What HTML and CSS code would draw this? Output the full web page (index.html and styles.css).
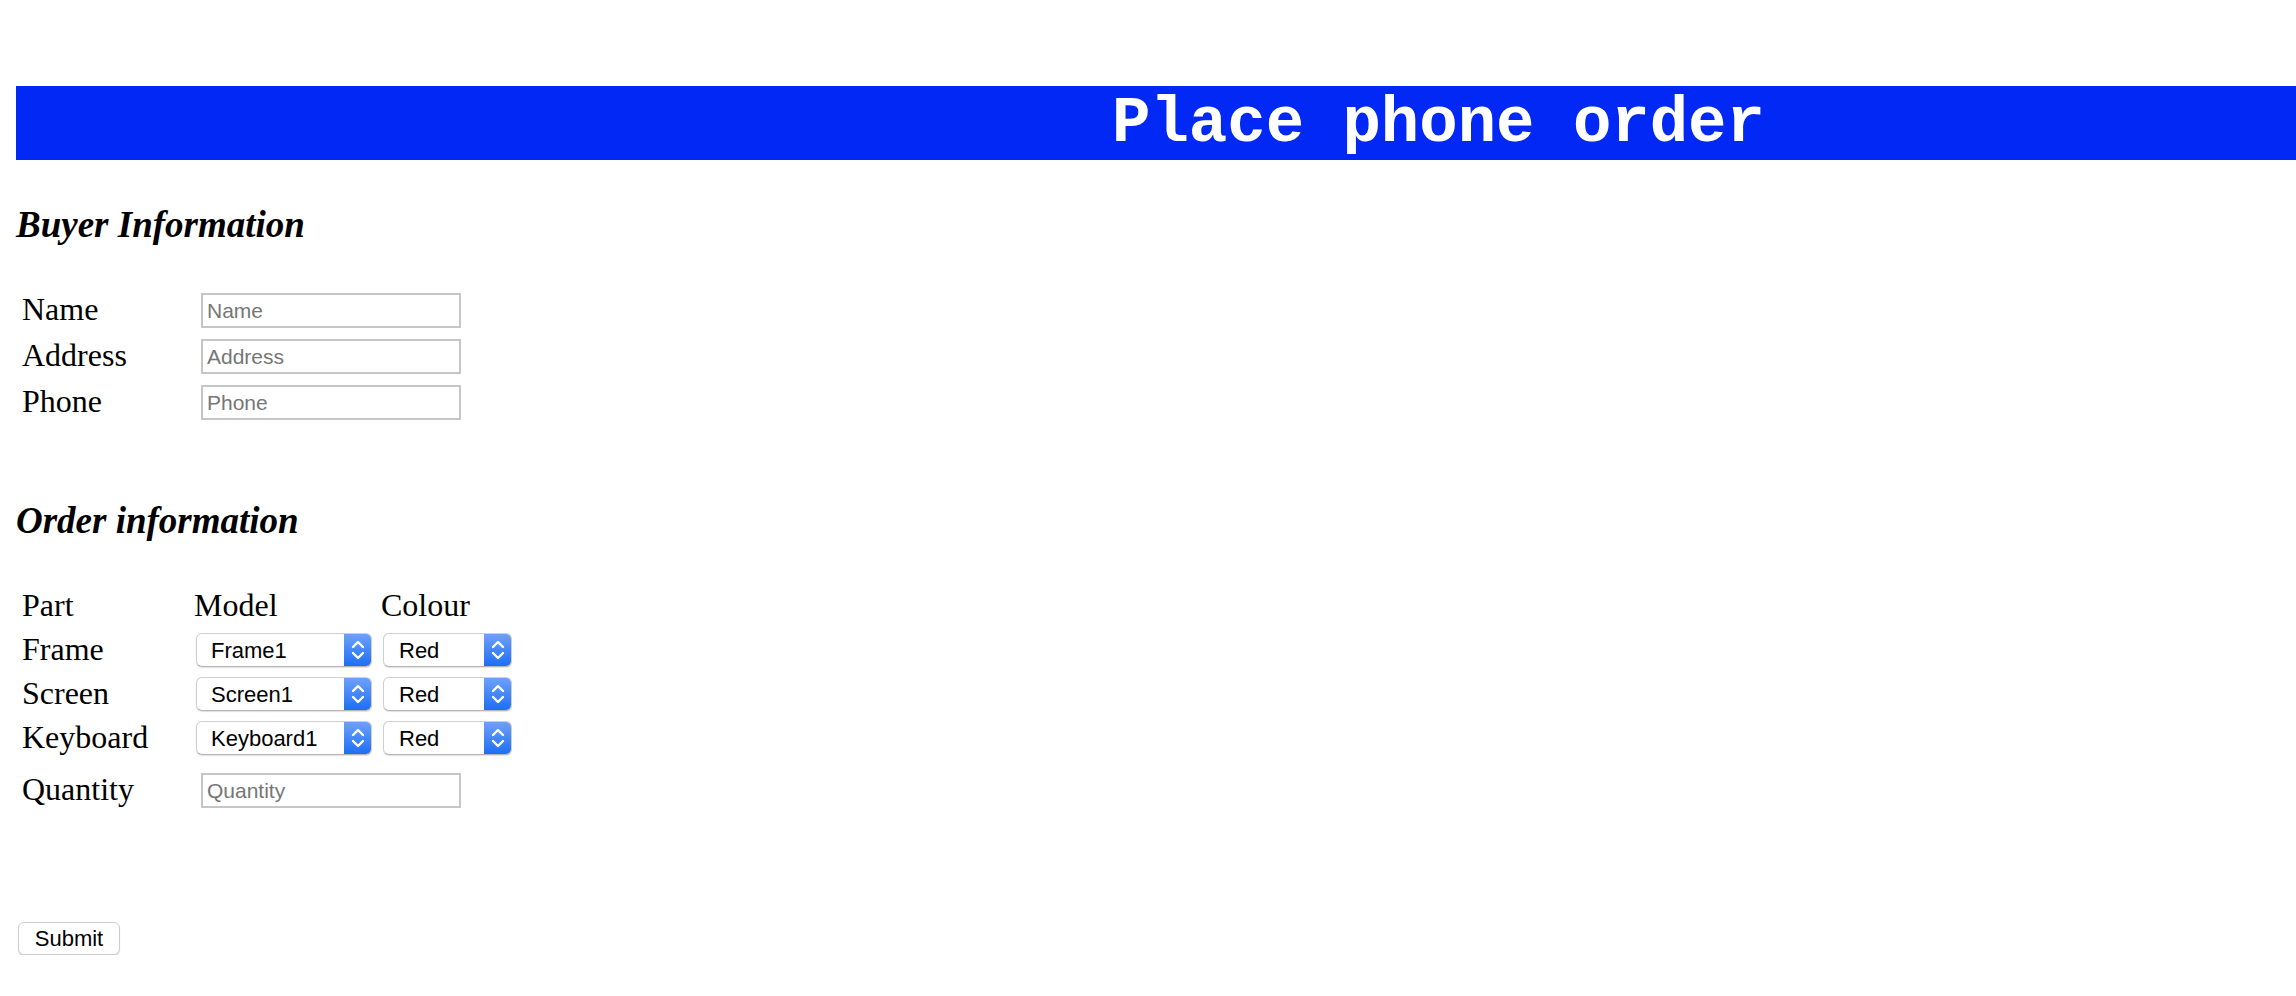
FILE: index.html
```html
<!DOCTYPE html>
<html lang="en">
<head>
<meta charset="utf-8">
<title>Place phone order</title>
<link rel="stylesheet" href="styles.css">
</head>
<body>
<div class="page">
  <h1 class="banner">Place phone order</h1>

  <h3 class="section-title">Buyer Information</h3>
  <div class="field-grid buyer">
    <label class="lbl">Name</label><input class="field" type="text" placeholder="Name">
    <label class="lbl">Address</label><input class="field" type="text" placeholder="Address">
    <label class="lbl">Phone</label><input class="field" type="text" placeholder="Phone">
  </div>

  <h3 class="section-title order-title">Order information</h3>
  <div class="order-grid">
    <span class="lbl">Part</span><span class="lbl hdr">Model</span><span class="lbl hdr">Colour</span>

    <span class="lbl">Frame</span>
    <span class="sel model"><select><option>Frame1</option></select><span class="arrow"><svg viewBox="0 0 28 34" width="28" height="34"><path d="M9 14 L14 9 L19 14 M9 20 L14 25 L19 20" /></svg></span></span>
    <span class="sel colour"><select><option>Red</option></select><span class="arrow"><svg viewBox="0 0 28 34" width="28" height="34"><path d="M9 14 L14 9 L19 14 M9 20 L14 25 L19 20" /></svg></span></span>

    <span class="lbl">Screen</span>
    <span class="sel model"><select><option>Screen1</option></select><span class="arrow"><svg viewBox="0 0 28 34" width="28" height="34"><path d="M9 14 L14 9 L19 14 M9 20 L14 25 L19 20" /></svg></span></span>
    <span class="sel colour"><select><option>Red</option></select><span class="arrow"><svg viewBox="0 0 28 34" width="28" height="34"><path d="M9 14 L14 9 L19 14 M9 20 L14 25 L19 20" /></svg></span></span>

    <span class="lbl">Keyboard</span>
    <span class="sel model"><select><option>Keyboard1</option></select><span class="arrow"><svg viewBox="0 0 28 34" width="28" height="34"><path d="M9 14 L14 9 L19 14 M9 20 L14 25 L19 20" /></svg></span></span>
    <span class="sel colour"><select><option>Red</option></select><span class="arrow"><svg viewBox="0 0 28 34" width="28" height="34"><path d="M9 14 L14 9 L19 14 M9 20 L14 25 L19 20" /></svg></span></span>
  </div>

  <div class="field-grid qty">
    <label class="lbl">Quantity</label><input class="field" type="text" placeholder="Quantity">
  </div>

  <button class="submit" type="button">Submit</button>
</div>
</body>
</html>
```

FILE: styles.css
```css
html, body {
  margin: 0;
  padding: 0;
  background: #ffffff;
}

body {
  font-family: "Liberation Serif", "Times New Roman", serif;
  color: #000000;
  overflow: hidden;
}

.page {
  padding: 86px 0 0 16px;
  display: flex;
  flex-direction: column;
  align-items: flex-start;
}

.banner {
  align-self: stretch;
  margin: 0;
  height: 74px;
  box-sizing: border-box;
  padding: 3px 0 0 1096px;
  line-height: 71px;
  background: #0228f6;
  color: #ffffff;
  font-family: "Liberation Mono", "Courier New", monospace;
  font-weight: bold;
  font-size: 64px;
  white-space: nowrap;
}

.section-title {
  margin: 44px 0 0 0;
  font-family: "Liberation Serif", "Times New Roman", serif;
  font-weight: bold;
  font-style: italic;
  font-size: 37px;
  line-height: 42px;
}

.order-title {
  margin-top: 80px;
}

.lbl {
  font-size: 32px;
  line-height: 32px;
  padding-left: 6px;
  white-space: nowrap;
}

.hdr {
  padding-left: 0;
  margin-left: -2px;
}

.field-grid {
  display: grid;
  grid-template-columns: 185px 260px;
  grid-auto-rows: 35px;
  row-gap: 11px;
  margin-top: 47px;
}

.field-grid .lbl {
  align-self: start;
}

.field {
  box-sizing: border-box;
  width: 260px;
  height: 35px;
  margin: 0;
  border: 2px solid #c6c6c6;
  border-radius: 0;
  padding: 0 4px;
  font-family: "Liberation Sans", Arial, sans-serif;
  font-size: 21px;
  color: #000;
  background: #fff;
  outline: none;
}

.field::placeholder {
  color: #767676;
}

.qty {
  margin-top: 18px;
}

.order-grid {
  display: grid;
  grid-template-columns: 169px 176px 129px;
  column-gap: 11px;
  grid-auto-rows: 34px;
  row-gap: 10px;
  margin-top: 47px;
}

.sel {
  position: relative;
  display: block;
  height: 34px;
  box-sizing: border-box;
  border: 1px solid #cfcfcf;
  border-bottom-color: #b5b5b5;
  border-radius: 6px;
  background: #ffffff;
  box-shadow: 0 1px 1px rgba(0, 0, 0, 0.12);
  overflow: hidden;
}

.sel select {
  -webkit-appearance: none;
  appearance: none;
  display: block;
  width: 100%;
  height: 32px;
  margin: 0;
  border: 0;
  background: transparent;
  font-family: "Liberation Sans", Arial, sans-serif;
  font-size: 22px;
  color: #000;
  padding: 0 30px 0 14px;
  outline: none;
}

.colour select {
  padding-left: 15px;
}

.arrow {
  position: absolute;
  top: -1px;
  right: -1px;
  width: 28px;
  height: 34px;
  background: linear-gradient(#6fa3fa, #1c6cf6);
  border-radius: 0 6px 6px 0;
  pointer-events: none;
}

.arrow svg {
  display: block;
}

.arrow path {
  fill: none;
  stroke: #ffffff;
  stroke-width: 2.4;
  stroke-linecap: round;
  stroke-linejoin: round;
}

.submit {
  margin: 114px 0 0 2px;
  width: 102px;
  height: 33px;
  box-sizing: border-box;
  padding: 0;
  border: 1px solid #cdcdcd;
  border-radius: 6px;
  background: #ffffff;
  box-shadow: 0 1px 1px rgba(0, 0, 0, 0.15);
  font-family: "Liberation Sans", Arial, sans-serif;
  font-size: 22px;
  color: #000;
}
```
